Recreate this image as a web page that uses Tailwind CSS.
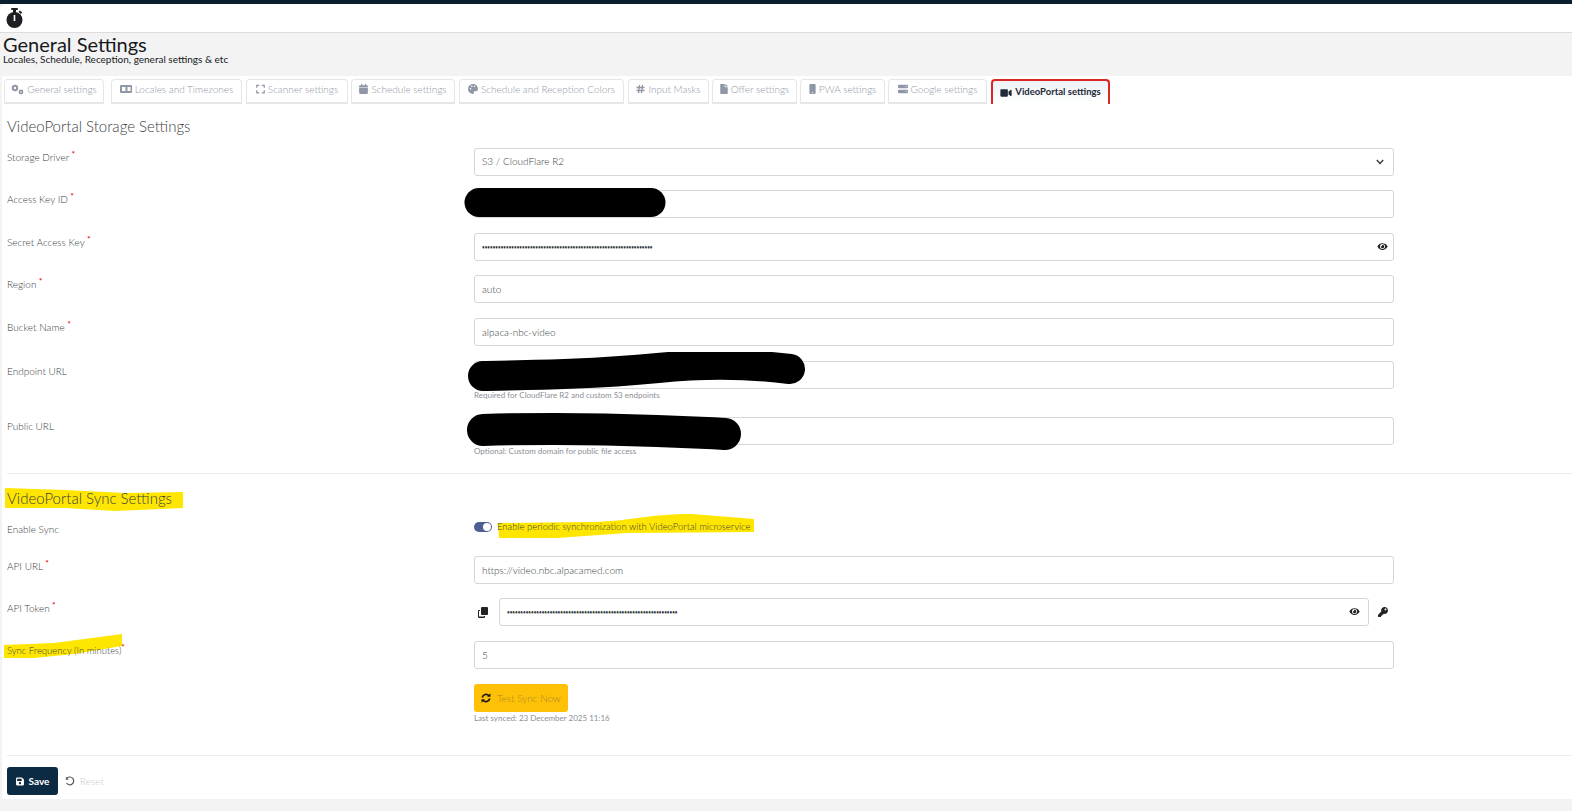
<!DOCTYPE html>
<html lang="en">
<head>
    <meta charset="UTF-8" />
    <meta name="viewport" content="width=device-width, initial-scale=1" />
    <title>General Settings</title>
    <script src="https://cdn.jsdelivr.net/npm/@tailwindcss/browser@4"></script>
</head>

<body class="bg-[#f3f3f3] font-['Lato',sans-serif] font-light text-[#3a3f45] h-[811px] overflow-hidden">
    <!-- top bar -->
    <div class="h-1 bg-[#0b1e2d]"></div>
    <nav class="h-[29px] bg-white border-b border-[#dcdcdc] pl-[6px] flex items-center rounded-tl-md">
        <svg class="w-[17px] h-[20px] text-[#1d1f22]" viewBox="0 0 17 20" fill="currentColor">
            <rect x="5" y="0" width="7" height="2" rx="1" />
            <rect x="7" y="1" width="3" height="4" />
            <rect x="13" y="3" width="3" height="2" transform="rotate(40 14 4)" />
            <circle cx="8.5" cy="12" r="8" />
            <rect x="7.7" y="7" width="1.6" height="6" fill="#fff" />
        </svg>
    </nav>

    <!-- page title -->
    <header class="h-[43px] pl-[3px] pt-[2px]">
        <h1 class="text-[20px] leading-[19px] font-normal text-[#17191c]">General Settings</h1>
        <p class="text-[10px] leading-[10px] font-normal text-[#17191c]">Locales, Schedule, Reception, general settings &amp; etc</p>
    </header>

    <main class="ml-[2px] h-[723px] bg-white">
        <!-- tabs -->
        <div class="flex items-start pl-[2px] pt-[3px] h-[28px] text-[10px] text-[#8f97a6]">
            <a class="w-[100px] h-[25px] mr-[7px] pb-[4px] flex items-center justify-center gap-[3px] border border-[#e4e6ea] border-b-2 rounded-t-[4px]">
                <svg class="w-[13px] h-[11px]" viewBox="0 0 13 11" fill="currentColor"><circle cx="4" cy="4" r="2.2" fill="none" stroke="currentColor" stroke-width="2"/><circle cx="10" cy="8" r="1.6" fill="none" stroke="currentColor" stroke-width="1.6"/></svg>
                General settings
            </a>
            <a class="w-[131px] h-[25px] mr-[4px] pb-[4px] flex items-center justify-center gap-[3px] border border-[#e4e6ea] border-b-2 rounded-t-[4px]">
                <svg class="w-[12px] h-[10px]" viewBox="0 0 12 10" fill="currentColor"><path fill-rule="evenodd" d="M1 1h10a1 1 0 0 1 1 1v6a1 1 0 0 1-1 1H1a1 1 0 0 1-1-1V2a1 1 0 0 1 1-1zm6.5 2v4h3V3zM2 3v4h3.5V3z"/></svg>
                Locales and Timezones
            </a>
            <a class="w-[102px] h-[25px] mr-[3px] pb-[4px] flex items-center justify-center gap-[3px] border border-[#e4e6ea] border-b-2 rounded-t-[4px]">
                <svg class="w-[9px] h-[10px]" viewBox="0 0 448 512" fill="currentColor"><path d="M0 180V56c0-13.3 10.7-24 24-24h124c6.6 0 12 5.4 12 12v40c0 6.6-5.4 12-12 12H64v84c0 6.6-5.4 12-12 12H12c-6.6 0-12-5.4-12-12zM288 44v40c0 6.6 5.4 12 12 12h84v84c0 6.6 5.4 12 12 12h40c6.6 0 12-5.4 12-12V56c0-13.3-10.7-24-24-24H300c-6.6 0-12 5.4-12 12zm148 276h-40c-6.6 0-12 5.4-12 12v84h-84c-6.6 0-12 5.4-12 12v40c0 6.6 5.4 12 12 12h124c13.3 0 24-10.7 24-24V332c0-6.6-5.4-12-12-12zM160 468v-40c0-6.6-5.4-12-12-12H64v-84c0-6.6-5.4-12-12-12H12c-6.6 0-12 5.4-12 12v124c0 13.3 10.7 24 24 24h124c6.6 0 12-5.4 12-12z"/></svg>
                Scanner settings
            </a>
            <a class="w-[104px] h-[25px] mr-[4px] pb-[4px] flex items-center justify-center gap-[3px] border border-[#e4e6ea] border-b-2 rounded-t-[4px]">
                <svg class="w-[9px] h-[10px]" viewBox="0 0 448 512" fill="currentColor"><path d="M12 192h424c6.6 0 12 5.4 12 12v260c0 26.5-21.5 48-48 48H48c-26.5 0-48-21.5-48-48V204c0-6.6 5.4-12 12-12zm436-44v-36c0-26.5-21.5-48-48-48h-48V12c0-6.6-5.4-12-12-12h-40c-6.6 0-12 5.4-12 12v52H160V12c0-6.6-5.4-12-12-12h-40c-6.6 0-12 5.4-12 12v52H48C21.5 64 0 85.5 0 112v36c0 6.6 5.4 12 12 12h424c6.6 0 12-5.4 12-12z"/></svg>
                Schedule settings
            </a>
            <a class="w-[165px] h-[25px] mr-[4px] pb-[4px] flex items-center justify-center gap-[3px] border border-[#e4e6ea] border-b-2 rounded-t-[4px]">
                <svg class="w-[10px] h-[10px]" viewBox="0 0 10 10" fill="currentColor"><path fill-rule="evenodd" d="M5 0a5 5 0 0 0 0 10c1 0 1.2-.8.8-1.4-.4-.7 0-1.4.9-1.4H8c1.2 0 2-.9 2-2.2C10 2 7.8 0 5 0zM2.5 5.5a.8.8 0 1 1 0-1.6.8.8 0 0 1 0 1.6zM3.8 3a.8.8 0 1 1 0-1.6.8.8 0 0 1 0 1.6zM6.5 3a.8.8 0 1 1 0-1.6.8.8 0 0 1 0 1.6z"/></svg>
                Schedule and Reception Colors
            </a>
            <a class="w-[81px] h-[25px] mr-[3px] pb-[4px] flex items-center justify-center gap-[3px] border border-[#e4e6ea] border-b-2 rounded-t-[4px]">
                <svg class="w-[9px] h-[10px]" viewBox="0 0 9 10" fill="none" stroke="currentColor" stroke-width="1.3"><path d="M3.5 1 2.5 9M6.5 1l-1 8M.5 3.5h8M.5 6.5h8"/></svg>
                Input Masks
            </a>
            <a class="w-[85px] h-[25px] mr-[3px] pb-[4px] flex items-center justify-center gap-[3px] border border-[#e4e6ea] border-b-2 rounded-t-[4px]">
                <svg class="w-[8px] h-[10px]" viewBox="0 0 384 512" fill="currentColor"><path d="M224 136V0H24C10.7 0 0 10.7 0 24v464c0 13.3 10.7 24 24 24h336c13.3 0 24-10.7 24-24V160H248c-13.2 0-24-10.8-24-24zm160-14.1v6.1H256V0h6.1c6.4 0 12.5 2.5 17 7l97.9 98c4.5 4.5 7 10.6 7 16.9z"/></svg>
                Offer settings
            </a>
            <a class="w-[85px] h-[25px] mr-[3px] pb-[4px] flex items-center justify-center gap-[3px] border border-[#e4e6ea] border-b-2 rounded-t-[4px]">
                <svg class="w-[7px] h-[10px]" viewBox="0 0 320 512" fill="currentColor"><path d="M272 0H48C21.5 0 0 21.5 0 48v416c0 26.5 21.5 48 48 48h224c26.5 0 48-21.5 48-48V48c0-26.5-21.5-48-48-48zM160 480c-17.7 0-32-14.3-32-32s14.3-32 32-32 32 14.3 32 32-14.3 32-32 32z"/></svg>
                PWA settings
            </a>
            <a class="w-[99px] h-[25px] mr-[4px] pb-[4px] flex items-center justify-center gap-[3px] border border-[#e4e6ea] border-b-2 rounded-t-[4px]">
                <svg class="w-[10px] h-[10px]" viewBox="0 0 10 10" fill="currentColor"><path fill-rule="evenodd" d="M1 .8h8a1 1 0 0 1 1 1v1.4a1 1 0 0 1-1 1H1a1 1 0 0 1-1-1V1.8a1 1 0 0 1 1-1zm6.5 1.8a.5.5 0 1 0 1 0 .5.5 0 0 0-1 0zM1 5.8h8a1 1 0 0 1 1 1v1.4a1 1 0 0 1-1 1H1a1 1 0 0 1-1-1V6.800a1 1 0 0 1 1-1zm6.500 1.800a.5.5 0 1 0 1 0 .5.5 0 0 0-1 0z"/></svg>
                Google settings
            </a>
            <a class="w-[119px] h-[25px] flex items-center justify-center gap-[3px] border-2 border-b-0 border-[#dc2626] rounded-t-[4px] font-bold text-[9.5px] text-[#1f2937] bg-gradient-to-b from-[#eef2f6] to-white">
                <svg class="w-[12px] h-[10px]" viewBox="0 0 576 512" fill="currentColor"><path d="M336.2 64H47.8C21.4 64 0 85.4 0 111.8v288.4C0 426.6 21.4 448 47.8 448h288.4c26.4 0 47.8-21.4 47.8-47.8V111.8c0-26.4-21.4-47.8-47.8-47.8zm189.4 37.7L416 177.3v157.4l109.6 75.5c21.2 14.6 50.4-.3 50.4-25.8V127.5c0-25.4-29.1-40.4-50.4-25.8z"/></svg>
                VideoPortal settings
            </a>
        </div>

        <!-- form -->
        <div class="pl-[5px] text-[10px]">
            <h2 class="text-[15px] leading-[20px] mt-[12px] mb-[12px]">VideoPortal Storage Settings</h2>

            <div class="grid grid-cols-[467px_920px] h-[28px] mb-[14px]">
                <label class="pt-[2px]">Storage Driver <sup class="font-bold text-red-600">*</sup></label>
                <div class="relative">
                    <select class="appearance-none w-full h-full border border-[#d3d6db] rounded-[3px] px-[7px] pb-[2px] text-[10px] bg-white">
                        <option>S3 / CloudFlare R2</option>
                    </select>
                    <svg class="absolute right-[10px] top-[11px] w-[8px] h-[6px] text-[#333]" viewBox="0 0 8 6" fill="none" stroke="currentColor" stroke-width="1.3"><path d="M.8 1 4 4.5 7.2 1"/></svg>
                </div>
            </div>

            <div class="grid grid-cols-[467px_920px] h-[28px] mb-[15px]">
                <label class="pt-[2px]">Access Key ID <sup class="font-bold text-red-600">*</sup></label>
                <div class="relative">
                    <input class="w-full h-full border border-[#d3d6db] rounded-[3px] px-[7px] text-[10px]" />
                    <svg class="absolute -left-[10px] -top-[3px] w-[202px] h-[31px]" viewBox="0 0 202 31"><path d="M15 15.5H187" stroke="#000" stroke-width="29" stroke-linecap="round"/></svg>
                </div>
            </div>

            <div class="grid grid-cols-[467px_920px] h-[28px] mb-[14px]">
                <label class="pt-[2px]">Secret Access Key <sup class="font-bold text-red-600">*</sup></label>
                <div class="relative">
                    <input type="password" value="1234567890123456789012345678901234567890123456789012345678901234" class="w-full h-full border border-[#d3d6db] rounded-[3px] px-[7px] text-[4.6px] font-bold" />
                    <svg class="absolute right-[6px] top-[9px] w-[11px] h-[9px] text-[#222]" viewBox="0 0 576 512" fill="currentColor"><path d="M572.52 241.4C518.29 135.59 410.93 64 288 64S57.68 135.64 3.48 241.41a32.35 32.35 0 0 0 0 29.19C57.71 376.41 165.07 448 288 448s230.32-71.64 284.52-177.41a32.35 32.35 0 0 0 0-29.19zM288 400a144 144 0 1 1 144-144 143.93 143.93 0 0 1-144 144zm0-240a95.31 95.31 0 0 0-25.31 3.79 47.85 47.85 0 0 1-66.9 66.9A95.78 95.78 0 1 0 288 160z"/></svg>
                </div>
            </div>

            <div class="grid grid-cols-[467px_920px] h-[28px] mb-[15px]">
                <label class="pt-[2px]">Region <sup class="font-bold text-red-600">*</sup></label>
                <input value="auto" class="w-full h-full border border-[#d3d6db] rounded-[3px] px-[7px] text-[10px]" />
            </div>

            <div class="grid grid-cols-[467px_920px] h-[28px] mb-[15px]">
                <label class="pt-[2px]">Bucket Name <sup class="font-bold text-red-600">*</sup></label>
                <input value="alpaca-nbc-video" class="w-full h-full border border-[#d3d6db] rounded-[3px] px-[7px] text-[10px]" />
            </div>

            <div class="grid grid-cols-[467px_920px] h-[28px] mb-[28px]">
                <label class="pt-[3px]">Endpoint URL</label>
                <div class="relative">
                    <input class="w-full h-full border border-[#d3d6db] rounded-[3px] px-[7px] text-[10px]" />
                    <p class="text-[8px] leading-[10px] mt-[1px] font-normal text-[#8b8f96]">Required for CloudFlare R2 and custom S3 endpoints</p>
                    <svg class="absolute -left-[6px] -top-[9px] w-[338px] h-[40px]" viewBox="0 0 338 40"><path d="M15 24C70 23 130 22 190 16S290 13 322 17" fill="none" stroke="#000" stroke-width="30" stroke-linecap="round"/></svg>
                </div>
            </div>

            <div class="grid grid-cols-[467px_920px] h-[28px]">
                <label class="pt-[2px]">Public URL</label>
                <div class="relative">
                    <input class="w-full h-full border border-[#d3d6db] rounded-[3px] px-[7px] text-[10px]" />
                    <p class="text-[8px] leading-[10px] mt-[1px] font-normal text-[#8b8f96]">Optional: Custom domain for public file access</p>
                    <svg class="absolute -left-[7px] -top-[6px] w-[276px] h-[40px]" viewBox="0 0 276 40"><path d="M16 19C80 17 140 18 190 20S240 22 258 23" fill="none" stroke="#000" stroke-width="32" stroke-linecap="round"/></svg>
                </div>
            </div>

            <hr class="mt-[28px] mb-[14px] border-[#ececec]" />

            <div class="relative">
                <svg class="absolute -left-[2px] -top-[1px] w-[180px] h-[25px]" viewBox="0 0 180 25"><path d="M0 1 60 3 120 6 178 5V21L110 24 60 21 0 21Z" fill="#ffe600"/></svg>
                <h2 class="relative text-[15px] leading-[20px] mb-[13px]">VideoPortal Sync Settings</h2>
            </div>

            <div class="grid grid-cols-[467px_920px] h-[28px] mb-[7px]">
                <label class="pt-[1px]">Enable Sync</label>
                <div class="relative flex items-start gap-[5px]">
                    <svg class="absolute left-[23px] -top-[7px] w-[258px] h-[25px]" viewBox="0 0 258 25"><path d="M1 9 90 8C130 8 150 0 195 0L257 5V18L130 19 60 24 2 24Z" fill="#ffe600"/></svg>
                    <span class="relative w-[18px] h-[10px] mt-[1px] rounded-full bg-[#4e5f94]"><span class="absolute right-[1px] top-[1px] w-[8px] h-[8px] rounded-full bg-white"></span></span>
                    <span class="relative text-[9.5px] leading-[11px]">Enable periodic synchronization with VideoPortal microservice</span>
                </div>
            </div>

            <div class="grid grid-cols-[467px_920px] h-[28px] mb-[14px]">
                <label class="pt-[3px]">API URL <sup class="font-bold text-red-600">*</sup></label>
                <input value="https://video.nbc.alpacamed.com" class="w-full h-full border border-[#d3d6db] rounded-[3px] px-[7px] text-[10px]" />
            </div>

            <div class="grid grid-cols-[467px_920px] h-[28px] mb-[15px]">
                <label class="pt-[3px]">API Token <sup class="font-bold text-red-600">*</sup></label>
                <div class="flex items-center">
                    <svg class="w-[10px] h-[11px] ml-[4px] mr-[11px] text-[#222]" viewBox="0 0 10 11" fill="currentColor"><rect x="3" y="0" width="7" height="8" rx="1"/><path d="M0 4a1 1 0 0 1 1-1h1v1H1v5.500h5V9h1v1a1 1 0 0 1-1 1H1a1 1 0 0 1-1-1z"/></svg>
                    <div class="relative w-[870px] h-full">
                        <input type="password" value="1234567890123456789012345678901234567890123456789012345678901234" class="w-full h-full border border-[#d3d6db] rounded-[3px] px-[7px] text-[4.6px] font-bold" />
                        <svg class="absolute right-[9px] top-[9px] w-[11px] h-[9px] text-[#222]" viewBox="0 0 576 512" fill="currentColor"><path d="M572.52 241.4C518.29 135.59 410.93 64 288 64S57.68 135.64 3.48 241.41a32.35 32.35 0 0 0 0 29.19C57.71 376.41 165.07 448 288 448s230.32-71.64 284.52-177.41a32.35 32.35 0 0 0 0-29.19zM288 400a144 144 0 1 1 144-144 143.93 143.93 0 0 1-144 144zm0-240a95.31 95.31 0 0 0-25.31 3.79 47.85 47.85 0 0 1-66.9 66.9A95.78 95.78 0 1 0 288 160z"/></svg>
                    </div>
                    <svg class="w-[10px] h-[10px] ml-[9px] text-[#222]" viewBox="0 0 512 512" fill="currentColor"><path d="M512 176.001C512 273.203 433.202 352 336 352c-11.22 0-22.19-1.062-32.827-3.069l-24.012 27.014A23.999 23.999 0 0 1 261.223 384H224v40c0 13.255-10.745 24-24 24h-40v40c0 13.255-10.745 24-24 24H24c-13.255 0-24-10.745-24-24v-78.059c0-6.365 2.529-12.47 7.029-16.971l161.802-161.802C163.108 213.814 160 195.271 160 176 160 78.798 238.797.001 335.999 0 433.488-.001 512 78.511 512 176.001zM336 128c0 26.51 21.49 48 48 48s48-21.49 48-48-21.49-48-48-48-48 21.49-48 48z"/></svg>
                </div>
            </div>

            <div class="grid grid-cols-[467px_920px] h-[28px] mb-[15px]">
                <div class="relative">
                    <svg class="absolute -left-[3px] -top-[7px] w-[119px] h-[24px]" viewBox="0 0 119 24"><path d="M0 11 50 9 118 0V12L70 20 30 24 0 24Z" fill="#ffe600"/></svg>
                    <label class="relative block mt-[3px] text-[9.5px] leading-[14px]">Sync Frequency (In minutes)<sup class="font-bold text-red-600">*</sup></label>
                </div>
                <input value="5" class="w-full h-full border border-[#d3d6db] rounded-[3px] px-[7px] text-[10px]" />
            </div>

            <div class="pl-[467px]">
                <button class="w-[94px] h-[28px] rounded-[3px] bg-[#ffc107] flex items-center pl-[7px] gap-[6px] text-[10px] text-[#a88a2c]">
                    <svg class="w-[10px] h-[10px] text-[#1a1a1a]" viewBox="0 0 10 10" fill="none" stroke="currentColor" stroke-width="1.7"><path d="M1.3 4.5A3.8 3.8 0 0 1 8 2.8M8.7 5.5A3.8 3.8 0 0 1 2 7.2"/><path d="M9.5 .3v3.4H6.2zM.5 9.7V6.3h3.3z" fill="currentColor" stroke="none"/></svg>
                    Test Sync Now
                </button>
                <p class="text-[8px] leading-[10px] mt-[1px] font-normal text-[#8b8f96]">Last synced: 23 December 2025 11:16</p>
            </div>

            <hr class="mt-[32px] mb-[11px] border-[#ececec]" />

            <div class="flex items-center gap-[7px]">
                <button class="w-[51px] h-[28px] rounded-[3px] bg-[#0b2b44] text-white font-bold flex items-center justify-center gap-[5px] text-[10px]">
                    <svg class="w-[8px] h-[9px]" viewBox="0 0 448 512" fill="currentColor"><path d="M433.941 129.941l-83.882-83.882A48 48 0 0 0 316.118 32H48C21.49 32 0 53.49 0 80v352c0 26.51 21.49 48 48 48h352c26.51 0 48-21.49 48-48V163.882a48 48 0 0 0-14.059-33.941zM224 416c-35.346 0-64-28.654-64-64 0-35.346 28.654-64 64-64s64 28.654 64 64c0 35.346-28.654 64-64 64zm96-304.52V212c0 6.627-5.373 12-12 12H76c-6.627 0-12-5.373-12-12V108c0-6.627 5.373-12 12-12h228.52c3.183 0 6.235 1.264 8.485 3.515l3.48 3.48A11.996 11.996 0 0 1 320 111.48z"/></svg>
                    Save
                </button>
                <span class="flex items-center gap-[5px] text-[#c9ccd1]">
                    <svg class="w-[10px] h-[10px] text-[#555]" viewBox="0 0 10 10" fill="none" stroke="currentColor" stroke-width="1.2"><path d="M2 2.2A3.9 3.9 0 1 1 1.5 7"/><path d="M.8 .8v3h3z" fill="currentColor" stroke="none"/></svg>
                    Reset
                </span>
            </div>
        </div>
    </main>
</body>
</html>
